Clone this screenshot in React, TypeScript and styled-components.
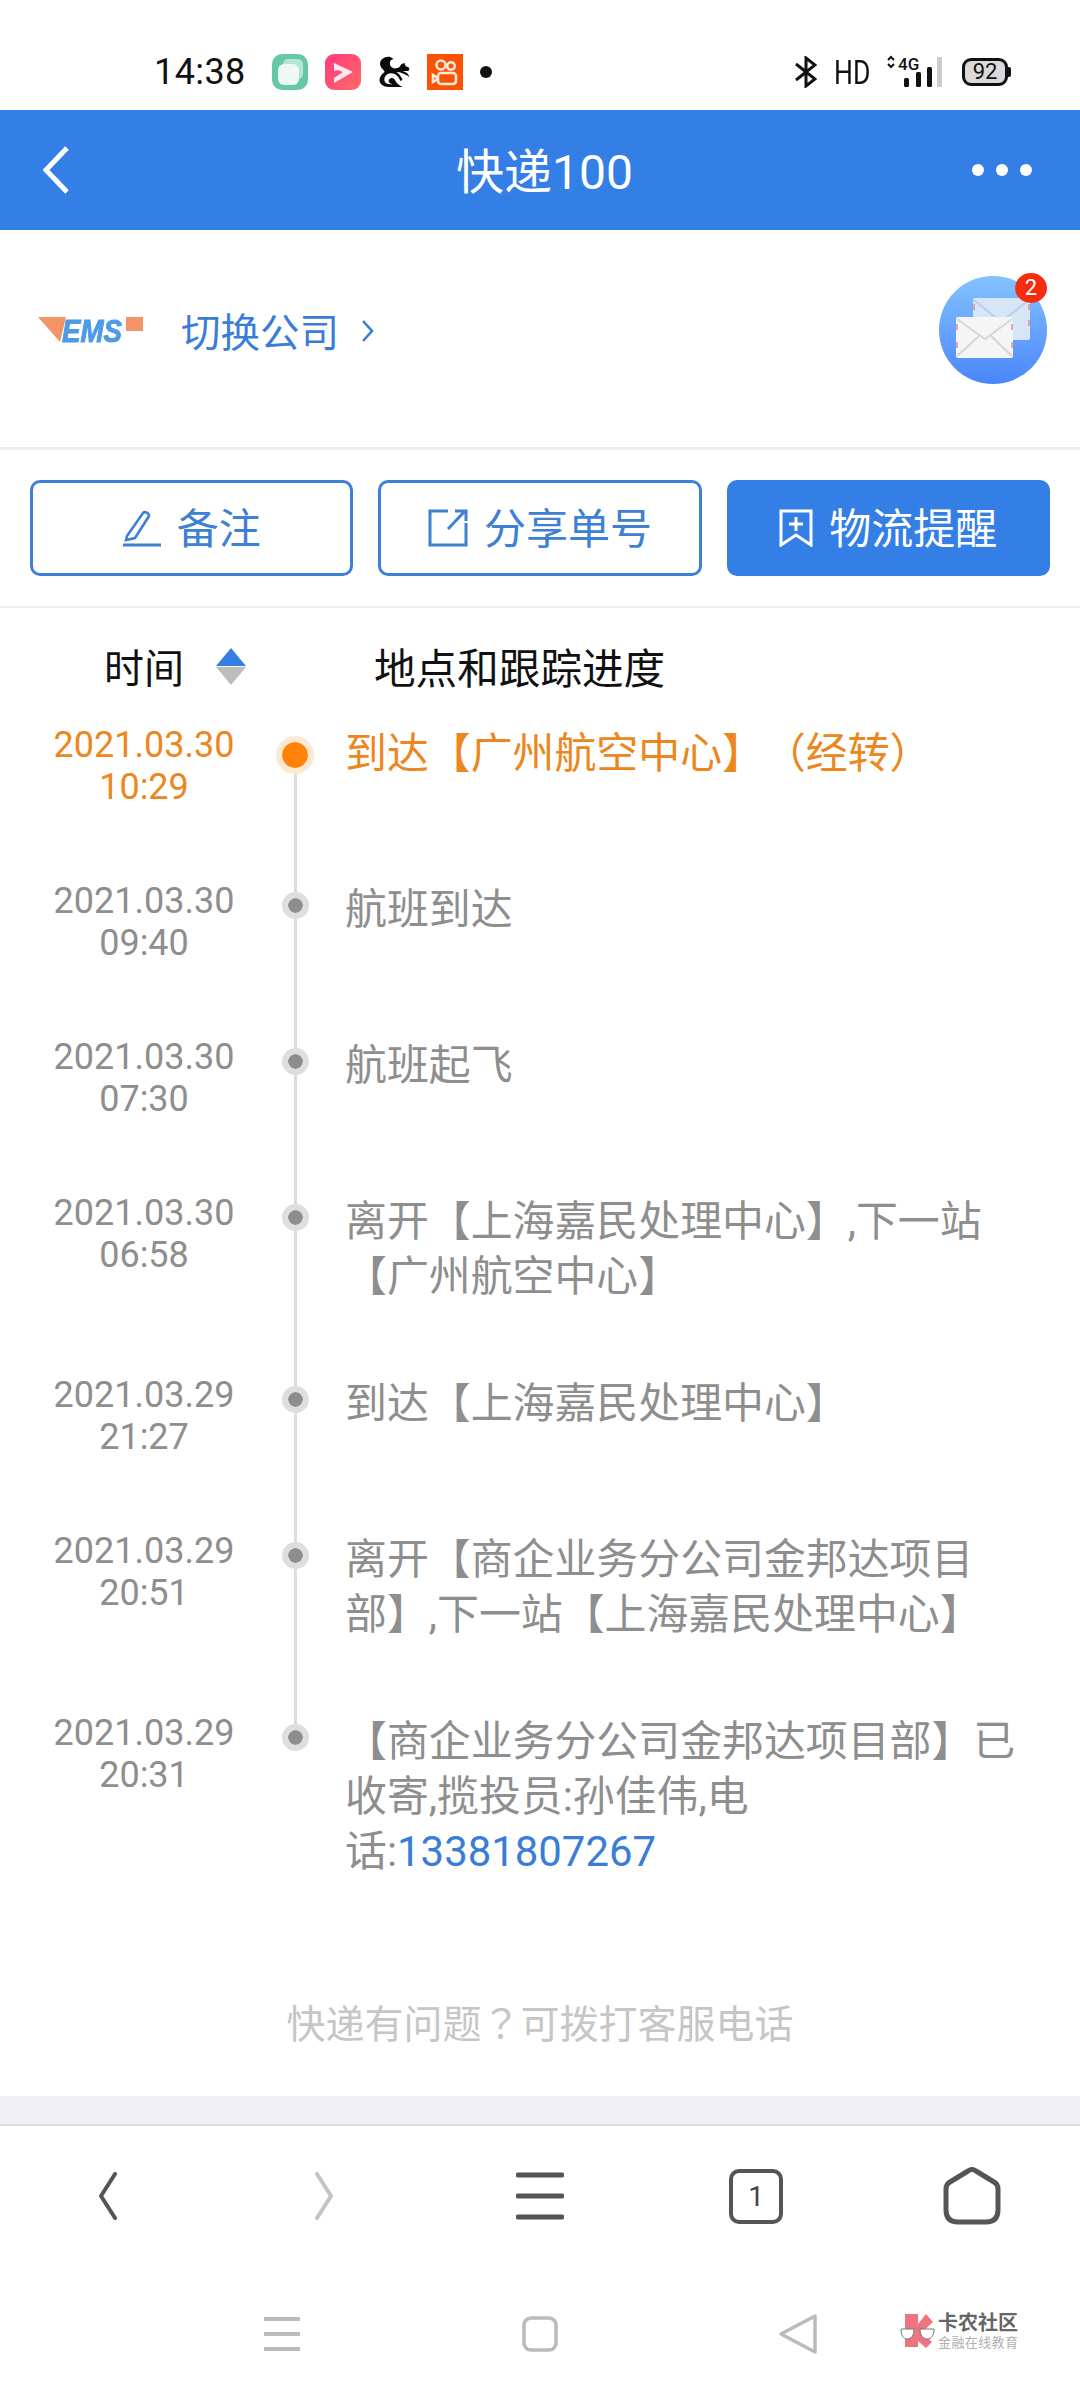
import styled, {createGlobalStyle} from "styled-components";

const GlobalStyle = createGlobalStyle`
  html, body {
    margin: 0;
    padding: 0;
    background: #fff;
  }
  body {
    font-family: Roboto, "Noto Sans CJK SC", sans-serif;
    text-spacing-trim: space-all;
  }
  * {
    box-sizing: border-box;
  }
`
const Page = styled.div`
  width: 1080px;
  height: 2400px;
  display: flex;
  flex-direction: column;
  position: relative;
  overflow: hidden;
  background: #fff;
`
const StatusBar = styled.div`
  height: 110px;
  flex-shrink: 0;
  display: flex;
  align-items: flex-start;
  padding: 54px 70px 0 154px;
`
const Clock = styled.span`
  width: 91px;
  height: 36px;
  margin-right: 27px;
  font-size: 36px;
  line-height: 36px;
  letter-spacing: 0.4px;
  color: #111;
`
const StatusGroup = styled.div`
  display: flex;
  align-items: center;
  height: 36px;
  gap: 17px;
`
const StatusRight = styled(StatusGroup)`
  margin-left: auto;
`
const HdLabel = styled.span`
  width: 36px;
  font-size: 34px;
  line-height: 36px;
  color: #111;
  transform: scaleX(0.78);
  transform-origin: left center;
`
const Battery = styled.div`
  position: relative;
  width: 46px;
  height: 28px;
  margin: 0 2px 0 3px;
  border: 3px solid #111;
  border-radius: 9px;
  background: #d9d9d9;
  color: #111;
  font-size: 22px;
  line-height: 22px;
  text-align: center;

  &::after {
    content: "";
    position: absolute;
    right: -6px;
    top: 6px;
    width: 3px;
    height: 10px;
    border-radius: 0 2px 2px 0;
    background: #111;
  }
`
const Header = styled.div`
  height: 120px;
  flex-shrink: 0;
  display: flex;
  align-items: center;
  padding: 0 48px 0 43px;
  background: #347fe6;
  color: #fff;
`
const Title = styled.h1`
  flex: 1;
  margin: 0;
  padding: 0 0 4px 48px;
  font-size: 48px;
  font-weight: 400;
  text-align: center;
`
const MoreDots = styled.div`
  display: flex;
  gap: 12px;

  i {
    width: 12px;
    height: 12px;
    border-radius: 50%;
    background: #fff;
  }
`
const Company = styled.div`
  height: 220px;
  flex-shrink: 0;
  display: flex;
  align-items: center;
  padding: 0 33px 18px 38px;
  border-bottom: 3px solid #eeeeee;
`
const SwitchLink = styled.a`
  display: flex;
  align-items: center;
  margin-left: 38px;
  font-size: 39.5px;
  color: #3a7dd6;

  svg {
    margin-left: 22px;
    margin-top: 2px;
  }
`
const Avatar = styled.div`
  position: relative;
  width: 108px;
  height: 108px;
  margin-left: auto;
  border-radius: 50%;
  background: linear-gradient(180deg, #84c2ff 0%, #4a86fa 100%);
`
const Badge = styled.span`
  position: absolute;
  top: -3px;
  right: 0;
  width: 32px;
  height: 30px;
  border-radius: 50%;
  background: #f52c0e;
  color: #fff;
  font-size: 22px;
  line-height: 30px;
  text-align: center;
`
const Actions = styled.div`
  flex-shrink: 0;
  display: flex;
  gap: 25px;
  padding: 30px;
  border-bottom: 2px solid #eeeeee;
`
const ActionButton = styled.button<{ $primary?: boolean }>`
  flex: 1;
  height: 96px;
  display: flex;
  align-items: center;
  justify-content: center;
  gap: 16px;
  padding: 0;
  border: 3px solid ${p => p.$primary ? "#347fe6" : "#3d80d4"};
  border-radius: 10px;
  background: ${p => p.$primary ? "#347fe6" : "#fff"};
  color: ${p => p.$primary ? "#fff" : "#3d80d4"};
  font-family: inherit;
  font-size: 42px;

  span {
    padding-bottom: 6px;
  }
`
const TableHead = styled.div`
  height: 116px;
  flex-shrink: 0;
  display: grid;
  grid-template-columns: 374px 1fr;
  align-items: center;
  font-size: 40px;
  color: #111;
`
const TimeHead = styled.div`
  display: flex;
  align-items: center;
  padding-left: 104px;
  gap: 32px;
`
const PlaceHead = styled.div`
  font-size: 41.6px;
`
const SortMark = styled.div`
  display: flex;
  flex-direction: column;
  gap: 1px;

  &::before, &::after {
    content: "";
    width: 0;
    height: 0;
    border-left: 15px solid transparent;
    border-right: 15px solid transparent;
  }

  &::before {
    border-bottom: 18px solid #347fe6;
  }

  &::after {
    border-top: 18px solid #bdbdbd;
  }
`
const Timeline = styled.div`
  flex-shrink: 0;
`
const Row = styled.div<{ $active?: boolean }>`
  display: grid;
  grid-template-columns: 288px 14px 1fr;
  color: ${p => p.$active ? "#ec8720" : "#8e8e8e"};
`
const DateCell = styled.div`
  padding-bottom: 72px;
  font-size: 36px;
  line-height: 42px;
  text-align: center;
`
const Axis = styled.div<{ $first?: boolean; $last?: boolean }>`
  position: relative;
  display: flex;
  justify-content: center;
  align-items: flex-start;

  &::before {
    content: "";
    position: absolute;
    left: 5.5px;
    width: 3px;
    top: ${p => p.$first ? "30px" : "0"};
    ${p => p.$last ? "height: 26px;" : "bottom: 0;"}
    background: #dddddd;
  }
`
const Dot = styled.span<{ $active?: boolean }>`
  position: relative;
  flex-shrink: 0;
  width: ${p => p.$active ? "38px" : "27px"};
  height: ${p => p.$active ? "38px" : "27px"};
  margin-top: 12px;
  border-radius: 50%;
  border: ${p => p.$active ? "6px solid #fde8d4" : "6px solid #dedede"};
  background: ${p => p.$active ? "#ff8308" : "#8d8d8d"};
  background-clip: padding-box;
`
const Progress = styled.div`
  padding: 2px 38px 70px 43px;
  font-size: 41.9px;
  line-height: 55px;

  a {
    color: #3a7dd6;
  }
`
const HelpLine = styled.div`
  height: 147px;
  flex-shrink: 0;
  display: flex;
  align-items: center;
  justify-content: center;
  padding-bottom: 3px;
  font-size: 39px;
  color: #c6c6c6;

  span {
    font-family: "Noto Sans CJK TC", sans-serif;
  }
`
const Band = styled.div`
  height: 30px;
  flex-shrink: 0;
  background: #efeff4;
  border-bottom: 2px solid #dedede;
`
const BrowserBar = styled.div`
  height: 140px;
  flex-shrink: 0;
  display: grid;
  grid-template-columns: repeat(5, 216px);
  align-items: center;
  justify-items: center;
`
const TabCount = styled.div`
  width: 54px;
  height: 55px;
  border: 4px solid #555;
  border-radius: 10px;
  color: #444;
  font-size: 28px;
  line-height: 47px;
  text-align: center;
`
const SystemBar = styled.div`
  flex: 1;
  display: grid;
  grid-template-columns: repeat(3, 258px);
  justify-content: center;
  align-items: center;
  justify-items: center;
  padding-top: 2px;
`
const Watermark = styled.div`
  position: absolute;
  left: 900px;
  top: 2312px;
  display: flex;
  align-items: center;
  gap: 2px;
`
const WatermarkText = styled.div`
  display: flex;
  flex-direction: column;
  gap: 2px;

  b {
    font-size: 20px;
    line-height: 22px;
    font-weight: 700;
    color: #666;
    white-space: nowrap;
  }

  span {
    font-size: 13px;
    line-height: 13px;
    letter-spacing: 0.4px;
    color: #b0b0b0;
    white-space: nowrap;
  }
`

const GreenApp = () => (
    <svg width="36" height="36" viewBox="0 0 36 36">
        <rect width="36" height="36" rx="10" fill="#66c8a9"/>
        <rect x="11" y="5" width="20" height="20" rx="5" fill="#b4e6d6"/>
        <rect x="6" y="10" width="21" height="21" rx="6" fill="#eef9f5"/>
    </svg>
)
const PinkApp = () => (
    <svg width="36" height="36" viewBox="0 0 36 36">
        <defs>
            <linearGradient id="pink" x1="0" y1="0" x2="1" y2="1">
                <stop offset="0" stopColor="#ff3a80"/>
                <stop offset="1" stopColor="#ff6a66"/>
            </linearGradient>
        </defs>
        <rect width="36" height="36" rx="9" fill="url(#pink)"/>
        <path d="M9 9 L28 18 L9 29 V24 L18 18 L13 16 L9 17 Z" fill="#ffe8ee"/>
    </svg>
)
const Squirrel = () => (
    <svg width="32" height="36" viewBox="0 -3 31 36">
        <path d="M12 0 C5 -1 0 4 2 9 C3 12 6 13 6 15 C3 17 1 20 1 23 C1 27 5 30 10 30 L24 30 C20 28 18 26 17 24 C16 21 13 20 11 22 C9 24 11 27 14 27 C8 28 5 25 6 21 C7 17 12 15 16 17 C20 19 21 22 22 24 L24 23 C23 20 21 17 18 15 C22 15 27 17 31 20 C30 17 28 15 24 14 L30 14 L31 11 L27 9 L26 6 L23 7 L21 10 C18 12 14 12 12 9 C11 6 11 3 15 2 Z" fill="#0a0a0a"/>
    </svg>
)
const VideoApp = () => (
    <svg width="36" height="36" viewBox="0 0 36 36">
        <rect width="36" height="36" fill="#fc5203"/>
        <g fill="none" stroke="#ffe9dc" strokeWidth="2.600">
            <circle cx="14" cy="11" r="4.500"/>
            <circle cx="24" cy="12" r="3.800"/>
            <rect x="11" y="19" width="18" height="11" rx="3"/>
            <path d="M11 24 L6 21 V28 L11 25"/>
        </g>
    </svg>
)
const Bluetooth = () => (
    <svg width="22" height="32" viewBox="0 0 22 32">
        <path d="M1 8 L20 23 L11 30 V2 L20 9 L1 24" fill="none" stroke="#111" strokeWidth="3"/>
    </svg>
)
const Signal = () => (
    <svg width="55" height="36" viewBox="0 0 55 36">
        <path d="M1 6 L4 3 L7 6 M1 10 L4 13 L7 10" fill="none" stroke="#111" strokeWidth="2"/>
        <text x="11" y="16" fontFamily="Roboto" fontSize="17" fontWeight="500" fill="#111">4G</text>
        <rect x="17" y="24" width="5" height="9" rx="1.500" fill="#111"/>
        <rect x="29" y="18" width="5" height="15" rx="1.500" fill="#111"/>
        <rect x="40" y="13" width="5" height="20" rx="1.500" fill="#111"/>
        <rect x="50" y="3" width="5" height="30" fill="#cccccc"/>
    </svg>
)
const BackArrow = () => (
    <svg width="26" height="48" viewBox="0 0 26 48">
        <path d="M24 2 L3 24 L24 46" fill="none" stroke="#fff" strokeWidth="5"/>
    </svg>
)
const EmsLogo = () => (
    <svg width="105" height="44" viewBox="0 -9 105 44" style={{filter: "blur(0.7px)"}}>
        <path d="M0 0 H28 L22 25 Z" fill="#f39468"/>
        <rect x="88" y="0" width="17" height="14" fill="#f39468"/>
        <text x="24" y="25" fontFamily="Liberation Sans" fontSize="31" fontWeight="700" fontStyle="italic"
              fill="#4d9be8" stroke="#4d9be8" strokeWidth="1" textLength="60" lengthAdjust="spacingAndGlyphs">EMS
        </text>
    </svg>
)
const SmallChevron = () => (
    <svg width="13" height="22" viewBox="0 0 13 22">
        <path d="M2 1 L11 11 L2 21" fill="none" stroke="#3a7dd6" strokeWidth="2.600"/>
    </svg>
)
const Envelopes = () => (
    <svg width="108" height="108" viewBox="0 0 108 108">
        <rect x="34" y="22" width="57" height="42" rx="2" fill="#d6e5f8"/>
        <path d="M35 24 L62 46 L90 24" fill="none" stroke="#b8cfe8" strokeWidth="2"/>
        <path d="M35 28 V34 M35 44 V50 M90 28 V34 M90 44 V50" stroke="#e58c8c" strokeWidth="1.500"/>
        <rect x="17" y="41" width="57" height="41" rx="2" fill="#f5f5f5"/>
        <path d="M18 43 L46 63 L73 43 M18 80 L40 60 M73 80 L52 60" fill="none" stroke="#d6d6d6" strokeWidth="2"/>
        <path d="M18 48 V54 M18 66 V72 M73 48 V54 M73 66 V72" stroke="#e58c8c" strokeWidth="1.500"/>
    </svg>
)
const PencilIcon = () => (
    <svg width="38" height="38" viewBox="0 0 38 38">
        <path d="M4 27 L20 4 C22 2 26 4 26 7 L12 29 L3 31 Z" fill="none" stroke="#3d80d4" strokeWidth="2.600"/>
        <path d="M0 36 H38" stroke="#3d80d4" strokeWidth="3"/>
    </svg>
)
const ShareIcon = () => (
    <svg width="40" height="38" viewBox="0 0 40 38">
        <path d="M20 2 H2 V36 H38 V14" fill="none" stroke="#3d80d4" strokeWidth="3"/>
        <path d="M20 20 L37 2 M27 2 H38 V12" fill="none" stroke="#3d80d4" strokeWidth="3"/>
    </svg>
)
const BookmarkIcon = () => (
    <svg width="34" height="38" viewBox="0 0 34 38">
        <path d="M2 2 H32 V36 L17 26 L2 36 Z" fill="none" stroke="#fff" strokeWidth="3"/>
        <path d="M17 8 V22 M10 15 H24" stroke="#fff" strokeWidth="3"/>
    </svg>
)
const NavBack = ({color}: { color: string }) => (
    <svg width="18" height="48" viewBox="0 0 18 48">
        <path d="M16 2 L2 24 L16 46" fill="none" stroke={color} strokeWidth="4" strokeLinecap="round" strokeLinejoin="round"/>
    </svg>
)
const NavForward = ({color}: { color: string }) => (
    <svg width="18" height="48" viewBox="0 0 18 48">
        <path d="M2 2 L16 24 L2 46" fill="none" stroke={color} strokeWidth="4" strokeLinecap="round" strokeLinejoin="round"/>
    </svg>
)
const NavMenu = () => (
    <svg width="48" height="48" viewBox="0 0 48 48">
        <path d="M2 3 H46 M2 24 H46 M2 45 H46" stroke="#555" strokeWidth="5" strokeLinecap="round"/>
    </svg>
)
const NavHome = () => (
    <svg width="58" height="58" viewBox="0 0 58 58">
        <path d="M25 4 Q29 1 33 4 L51 15 Q55 17 55 22 V43 Q55 55 43 55 H15 Q3 55 3 43 V22 Q3 17 7 15 Z" fill="none" stroke="#555" strokeWidth="5" strokeLinejoin="round"/>
    </svg>
)
const SysMenu = () => (
    <svg width="36" height="36" viewBox="0 0 36 36">
        <path d="M0 3 H36 M0 18 H36 M0 33 H36" stroke="#bbb" strokeWidth="4"/>
    </svg>
)
const SysHome = () => (
    <svg width="36" height="36" viewBox="0 0 36 36">
        <rect x="2" y="2" width="32" height="32" rx="7" fill="none" stroke="#bbb" strokeWidth="3.500"/>
    </svg>
)
const SysBack = () => (
    <svg width="38" height="40" viewBox="0 0 38 40">
        <path d="M36 2 V38 L2 20 Z" fill="none" stroke="#bbb" strokeWidth="3.500" strokeLinejoin="round"/>
    </svg>
)
const KnLogo = () => (
    <svg width="36" height="34" viewBox="0 0 36 34">
        <path d="M5 0 H18 V10 L26 0 L33 8 L22 18 L32 28 L26 34 L18 27 V33 H5 Z" fill="#ee7480"/>
        <path d="M1 15 H14 C14 22 11 25 7 25 C3 25 1 21 1 15 Z M20 15 H34 C34 21 32 25 27 25 C23 25 20 21 20 15 Z" fill="#fff" stroke="#777" strokeWidth="1"/>
    </svg>
)

type Track = {
    date: string
    time: string
    text: string
    phone?: string
}
const tracks: Track[] = [
    {date: "2021.03.30", time: "10:29", text: "到达【广州航空中心】（经转）"},
    {date: "2021.03.30", time: "09:40", text: "航班到达"},
    {date: "2021.03.30", time: "07:30", text: "航班起飞"},
    {date: "2021.03.30", time: "06:58", text: "离开【上海嘉民处理中心】,下一站【广州航空中心】"},
    {date: "2021.03.29", time: "21:27", text: "到达【上海嘉民处理中心】"},
    {date: "2021.03.29", time: "20:51", text: "离开【商企业务分公司金邦达项目部】,下一站【上海嘉民处理中心】"},
    {
        date: "2021.03.29",
        time: "20:31",
        text: "【商企业务分公司金邦达项目部】已收寄,揽投员:孙佳伟,电话:",
        phone: "13381807267"
    },
]

const App = () => {
    return (
        <Page>
            <GlobalStyle/>
            <StatusBar>
                <Clock>14:38</Clock>
                <StatusGroup>
                    <GreenApp/>
                    <PinkApp/>
                    <Squirrel/>
                    <VideoApp/>
                    <svg width="12" height="12" viewBox="0 0 12 12">
                        <circle cx="6" cy="6" r="6" fill="#111"/>
                    </svg>
                </StatusGroup>
                <StatusRight>
                    <Bluetooth/>
                    <HdLabel>HD</HdLabel>
                    <Signal/>
                    <Battery>92</Battery>
                </StatusRight>
            </StatusBar>
            <Header>
                <BackArrow/>
                <Title>快递100</Title>
                <MoreDots><i/><i/><i/></MoreDots>
            </Header>
            <Company>
                <EmsLogo/>
                <SwitchLink>切换公司<SmallChevron/></SwitchLink>
                <Avatar>
                    <Envelopes/>
                    <Badge>2</Badge>
                </Avatar>
            </Company>
            <Actions>
                <ActionButton><PencilIcon/><span>备注</span></ActionButton>
                <ActionButton><ShareIcon/><span>分享单号</span></ActionButton>
                <ActionButton $primary><BookmarkIcon/><span>物流提醒</span></ActionButton>
            </Actions>
            <TableHead>
                <TimeHead>时间<SortMark/></TimeHead>
                <PlaceHead>地点和跟踪进度</PlaceHead>
            </TableHead>
            <Timeline>
                {tracks.map((track, index) =>
                    <Row key={track.date + track.time} $active={index === 0}>
                        <DateCell>{track.date}<br/>{track.time}</DateCell>
                        <Axis $first={index === 0} $last={index === tracks.length - 1}>
                            <Dot $active={index === 0}/>
                        </Axis>
                        <Progress>
                            {track.text}
                            {track.phone && <a>{track.phone}</a>}
                        </Progress>
                    </Row>
                )}
            </Timeline>
            <HelpLine>快递有问题<span>？</span>可拨打客服电话</HelpLine>
            <Band/>
            <BrowserBar>
                <NavBack color="#555"/>
                <NavForward color="#c4c4c4"/>
                <NavMenu/>
                <TabCount>1</TabCount>
                <NavHome/>
            </BrowserBar>
            <SystemBar>
                <SysMenu/>
                <SysHome/>
                <SysBack/>
            </SystemBar>
            <Watermark>
                <KnLogo/>
                <WatermarkText>
                    <b>卡农社区</b>
                    <span>金融在线教育</span>
                </WatermarkText>
            </Watermark>
        </Page>
    )
}

export default App
